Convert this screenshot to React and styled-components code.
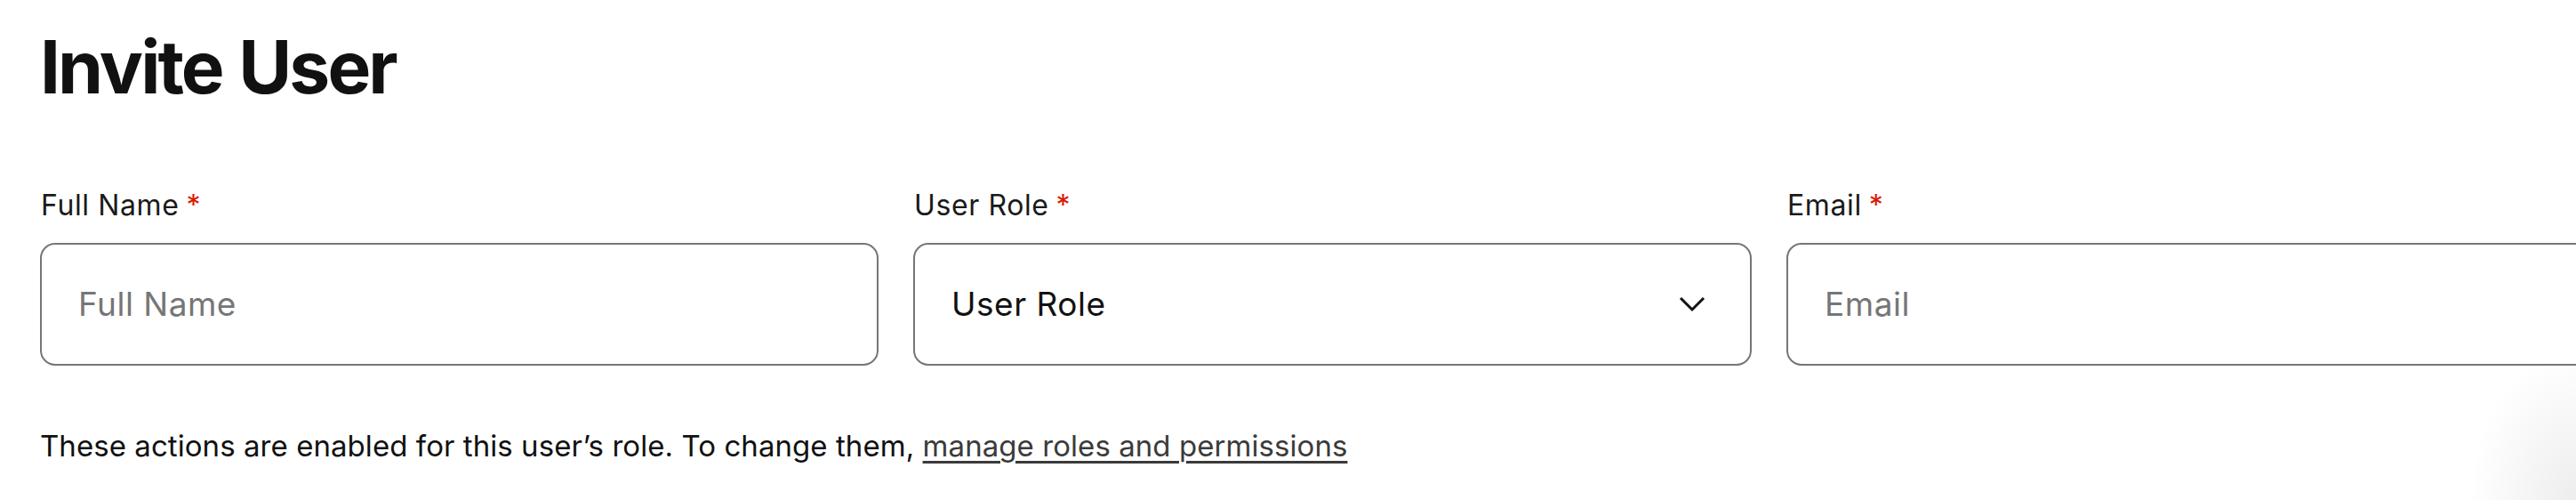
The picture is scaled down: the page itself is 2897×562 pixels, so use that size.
import React from "react";
import styled, { createGlobalStyle } from "styled-components";

const Global = createGlobalStyle`
  html, body {
    margin: 0;
    padding: 0;
    overflow: hidden;
    background: #fff;
  }
  body {
    font-family: Inter, "Noto Sans", "Liberation Sans", sans-serif;
    color: #111;
    width: 2897px;
    height: 562px;
    background: radial-gradient(ellipse 120px 170px at 100% 100%, rgba(0,0,0,0.07), rgba(0,0,0,0) 100%) #fff;
  }
`;

const Page = styled.main`
  padding: 26px 0 0 45px;
  width: 2920px;
  box-sizing: border-box;
`;

const Title = styled.h1`
  margin: 0;
  font-size: 82px;
  line-height: 100px;
  font-weight: 700;
  letter-spacing: -2.9px;
  word-spacing: 2px;
  color: #111;
`;

const FieldRow = styled.div`
  display: grid;
  grid-template-columns: repeat(3, 943px);
  column-gap: 39px;
  margin-top: 85px;
`;

const Field = styled.div`
  display: flex;
  flex-direction: column;
  gap: 22px;
`;

const Label = styled.label`
  font-size: 32px;
  line-height: 40px;
  font-weight: 400;
  letter-spacing: 0.6px;
  color: #1a1a1a;
  padding-left: 1px;
`;

const Required = styled.span`
  color: #db1802;
  margin-left: 8px;
`;

const Box = styled.div`
  box-sizing: border-box;
  height: 138px;
  border: 2px solid #767676;
  border-radius: 17px;
  display: flex;
  align-items: center;
  justify-content: space-between;
  padding: 0 50px 0 41px;
  background: #fff;
`;

const Value = styled.span`
  font-size: 37px;
  line-height: 44px;
  letter-spacing: 0.5px;
  color: ${(p) => (p.$placeholder ? "#767676" : "#111")};
`;

const Chevron = () => (
  <svg width="30" height="18" viewBox="0 0 30 18" fill="none">
    <path d="M2 2 L15 15 L28 2" stroke="#111" strokeWidth="3" />
  </svg>
);

const Helper = styled.p`
  margin: 66px 0 0;
  font-size: 33px;
  line-height: 48px;
  letter-spacing: 0.06px;
  color: #111;
`;

const Link = styled.a`
  color: #3b3b3b;
  text-decoration: underline;
  text-decoration-thickness: 3px;
  text-underline-offset: 5px;
`;

export default function App() {
  return (
    <>
      <Global />
      <Page>
        <Title>Invite User</Title>
        <FieldRow>
          <Field>
            <Label>
              Full Name<Required>*</Required>
            </Label>
            <Box>
              <Value $placeholder>Full Name</Value>
            </Box>
          </Field>
          <Field>
            <Label>
              User Role<Required>*</Required>
            </Label>
            <Box>
              <Value>User Role</Value>
              <Chevron />
            </Box>
          </Field>
          <Field>
            <Label>
              Email<Required>*</Required>
            </Label>
            <Box>
              <Value $placeholder>Email</Value>
            </Box>
          </Field>
        </FieldRow>
        <Helper>
          These actions are enabled for this user’s role. To change them,{" "}
          <Link href="#">manage roles and permissions</Link>
        </Helper>
      </Page>
    </>
  );
}
